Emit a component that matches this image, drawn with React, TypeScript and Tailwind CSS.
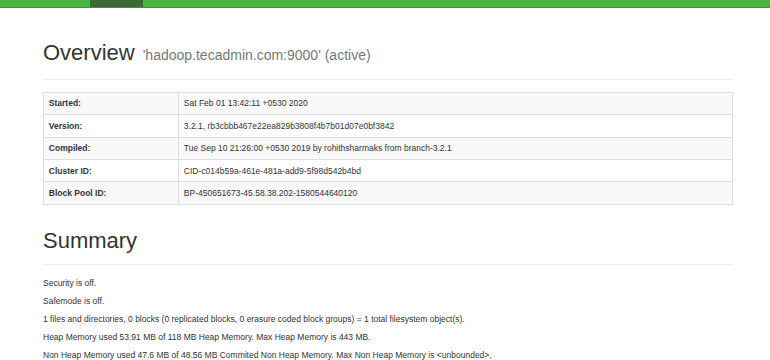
const rows = [
  { label: 'Started:', value: 'Sat Feb 01 13:42:11 +0530 2020' },
  { label: 'Version:', value: '3.2.1, rb3cbbb467e22ea829b3808f4b7b01d07e0bf3842' },
  { label: 'Compiled:', value: 'Tue Sep 10 21:26:00 +0530 2019 by rohithsharmaks from branch-3.2.1' },
  { label: 'Cluster ID:', value: 'CID-c014b59a-461e-481a-add9-5f98d542b4bd' },
  { label: 'Block Pool ID:', value: 'BP-450651673-45.58.38.202-1580544640120' },
]

const summary = [
  'Security is off.',
  'Safemode is off.',
  '1 files and directories, 0 blocks (0 replicated blocks, 0 erasure coded block groups) = 1 total filesystem object(s).',
  'Heap Memory used 53.91 MB of 118 MB Heap Memory. Max Heap Memory is 443 MB.',
  'Non Heap Memory used 47.6 MB of 48.56 MB Commited Non Heap Memory. Max Non Heap Memory is <unbounded>.',
]

function PageHeader({ title, sub }: { title: string; sub?: string }) {
  return (
    <div className="border-b border-[#eeeeee] pb-[5.4px]">
      <h1 className="mb-[6px] text-[22px] leading-[23.76px] font-normal text-[#333]">
        {title}
        {sub && <span className="ml-[8px] text-[14px] text-[#777]">{sub}</span>}
      </h1>
    </div>
  )
}

export default function App() {
  return (
    <div className="min-h-[360px] w-[770px] overflow-hidden bg-white font-['Liberation_Sans',Arial,sans-serif] text-[8.5px] text-[#333]">
      {/* navbar */}
      <div className="flex h-[8px] border-b border-[#6f6f6f] bg-[#4ab640]">
        <div className="ml-[90px] w-[53px] bg-[#3b6c34]" />
      </div>

      <div className="mx-[43px] flex w-[690px] flex-col">
        <div className="mt-[32.6px]">
          <PageHeader title="Overview" sub="'hadoop.tecadmin.com:9000' (active)" />
        </div>

        <table className="mt-[12px] w-full border-collapse border border-[#dddddd]">
          <tbody>
            {rows.map((r, i) => (
              <tr key={r.label} className={i % 2 === 0 ? 'bg-[#f9f9f9]' : 'bg-white'}>
                <th className="w-[135px] border border-[#dddddd] px-[4.8px] py-[4.7px] text-left leading-[12px] font-bold">
                  {r.label}
                </th>
                <td className="border border-[#dddddd] px-[4.8px] py-[4.7px] leading-[12px]">{r.value}</td>
              </tr>
            ))}
          </tbody>
        </table>

        <div className="mt-[24px]">
          <PageHeader title="Summary" />
        </div>

        <div className="mt-[12px] flex flex-col">
          {summary.map((s) => (
            <p key={s} className="mb-[6px] leading-[12px]">
              {s}
            </p>
          ))}
        </div>
      </div>
    </div>
  )
}
